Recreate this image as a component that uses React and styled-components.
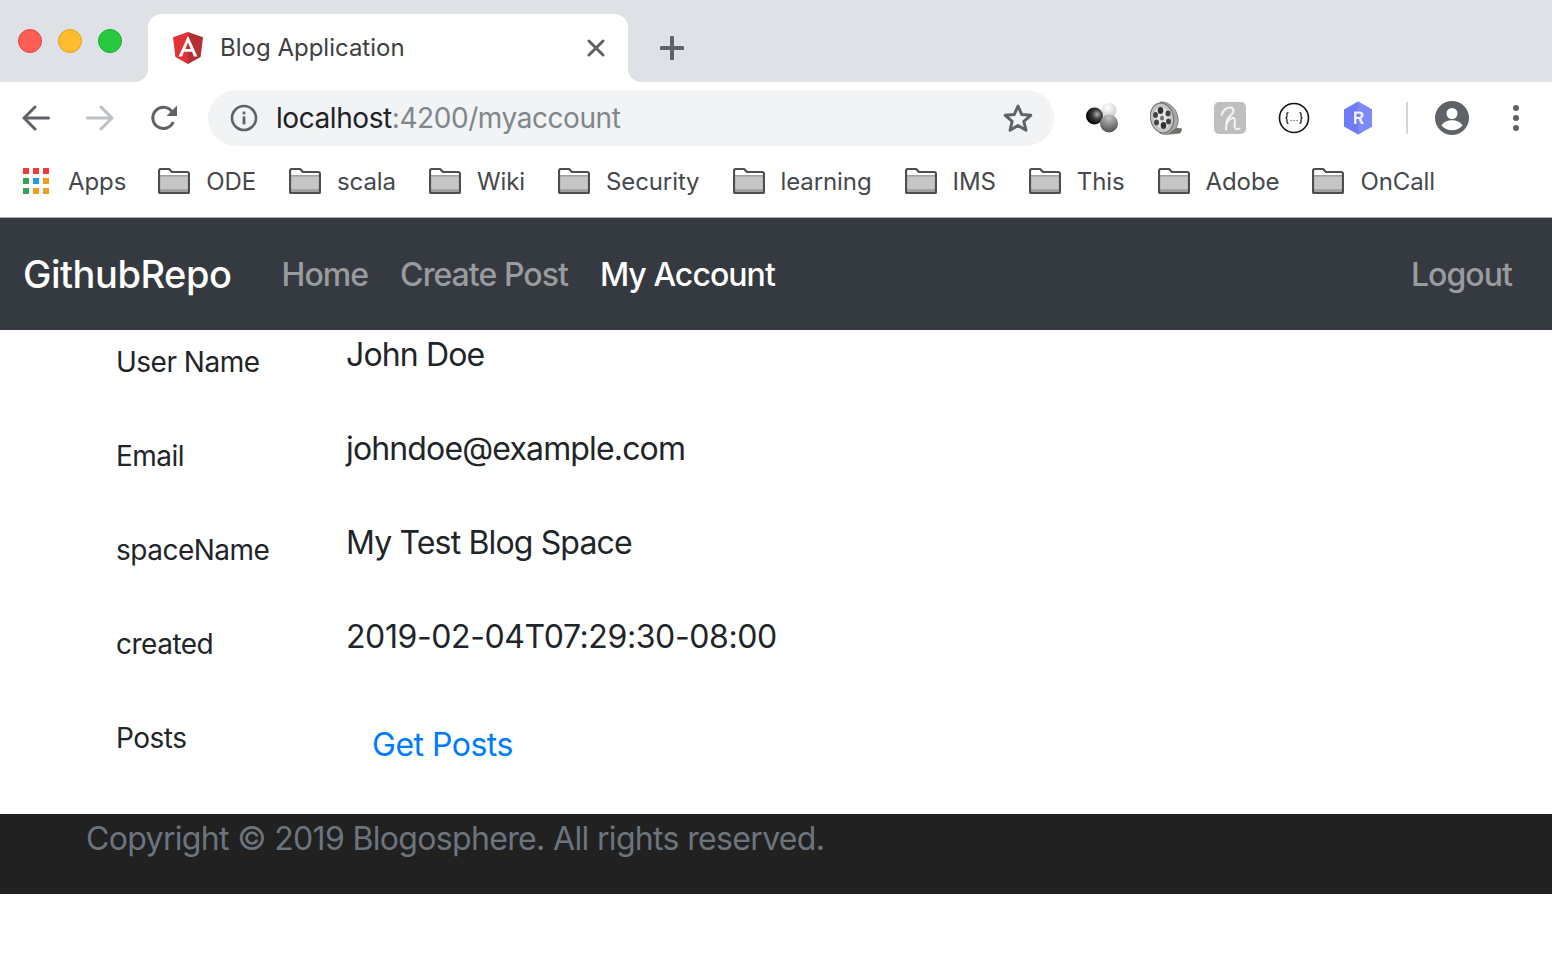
import React from "react";
import styled, { createGlobalStyle } from "styled-components";

const GlobalStyle = createGlobalStyle`
  html, body {
    margin: 0;
    padding: 0;
    background: #fff;
    font-family: Inter, "Liberation Sans", sans-serif;
  }
  * { box-sizing: border-box; }
`;

const TabStrip = styled.div`
  height: 82px;
  background: #dee1e6;
  display: flex;
  align-items: flex-end;
  padding-left: 18px;
`;

const Lights = styled.div`
  display: flex;
  gap: 16px;
  align-self: flex-start;
  margin-top: 29px;
  margin-right: 26px;
`;

const Light = styled.span`
  width: 24px;
  height: 24px;
  border-radius: 50%;
  background: ${(p) => p.$color};
  border: 1px solid ${(p) => p.$edge};
`;

const Tab = styled.div`
  position: relative;
  width: 480px;
  height: 68px;
  background: #fff;
  border-radius: 14px 14px 0 0;
  display: flex;
  align-items: center;
  padding: 0 23px 0 24px;
  &::before, &::after {
    content: "";
    position: absolute;
    bottom: 0;
    width: 14px;
    height: 14px;
  }
  &::before {
    left: -14px;
    background: radial-gradient(circle at 0 0, #dee1e6 14px, #fff 14.5px);
  }
  &::after {
    right: -14px;
    background: radial-gradient(circle at 100% 0, #dee1e6 14px, #fff 14.5px);
  }
`;

const TabTitle = styled.span`
  flex: 1;
  margin-left: 16px;
  padding-bottom: 2px;
  font-size: 24px;
  color: #3c4043;
`;

const NewTab = styled.svg`
  width: 24px;
  height: 24px;
  margin: 0 0 22px 32px;
`;

const Toolbar = styled.div`
  height: 72px;
  display: flex;
  align-items: center;
  padding-left: 22px;
`;

const NavIcons = styled.div`
  display: flex;
  align-items: center;
  gap: 36px;
  margin-right: 30px;
`;

const Omnibox = styled.div`
  width: 846px;
  height: 56px;
  border-radius: 28px;
  background: #f1f3f4;
  display: flex;
  align-items: center;
  padding: 0 20px 0 22px;
`;

const Url = styled.span`
  flex: 1;
  margin-left: 18px;
  font-size: 28px;
  color: #202124;
  letter-spacing: -0.43px;
`;

const UrlRest = styled.span`
  color: #80868b;
`;

const Extensions = styled.div`
  display: flex;
  align-items: center;
  margin-left: 16px;
`;

const ExtSlot = styled.div`
  width: 64px;
  height: 36px;
  display: flex;
  align-items: center;
  justify-content: center;
`;

const Divider = styled.span`
  width: 2px;
  height: 32px;
  background: #d4d6d9;
  margin: 0 12px 0 16px;
`;

const Bookmarks = styled.div`
  height: 64px;
  border-bottom: 1px solid #a9abae;
  display: flex;
  align-items: center;
  padding: 0 0 9px 23px;
`;

const Bookmark = styled.div`
  display: flex;
  align-items: center;
  gap: 16px;
  margin-right: 33px;
  font-size: 24px;
  color: #45484c;
  letter-spacing: -0.1px;
  white-space: nowrap;
`;

const AppsBookmark = styled(Bookmark)`
  gap: 19px;
  margin-right: 32px;
`;

const Navbar = styled.nav`
  height: 112px;
  background: #343a40;
  display: flex;
  align-items: center;
  padding: 0 40px 0 23px;
`;

const Brand = styled.a`
  font-size: 38px;
  font-weight: 500;
  color: #fff;
  margin-right: 50px;
  letter-spacing: -0.45px;
`;

const NavLinks = styled.div`
  display: flex;
  gap: 32px;
  flex: 1;
`;

const NavLink = styled.a`
  font-size: 32px;
  font-weight: 500;
  letter-spacing: -0.95px;
  color: ${(p) => (p.$active ? "#fff" : "rgba(255,255,255,0.5)")};
`;

const Content = styled.main`
  height: 484px;
  padding-left: 116px;
`;

const Row = styled.div`
  height: 94px;
  display: grid;
  grid-template-columns: 230px 1fr;
`;

const Label = styled.div`
  font-size: 28px;
  line-height: 42px;
  padding-top: 11px;
  color: #212529;
  letter-spacing: -0.5px;
`;

const Value = styled.div`
  font-size: 32px;
  line-height: 48px;
  padding-top: 1px;
  color: #212529;
  letter-spacing: ${(p) => (p.$numeric ? "-0.4px" : "-0.85px")};
`;

const PostsLink = styled.a`
  display: block;
  font-size: 32px;
  line-height: 48px;
  margin: 15px 0 0 26px;
  color: #007bff;
  letter-spacing: -0.5px;
`;

const Footer = styled.footer`
  height: 80px;
  background: #212121;
  padding: 1px 0 0 86px;
  font-size: 32px;
  line-height: 48px;
  color: #6c757d;
  letter-spacing: -0.66px;
`;

const AngularLogo = () => (
  <svg width="32" height="34" viewBox="0 0 32 34">
    <path d="M16 1 1 6.3l2.4 19.6L16 33z" fill="#e23237" />
    <path d="M16 1l15 5.3-2.4 19.6L16 33z" fill="#b52e31" />
    <path d="M16 4.7 6.6 25.5h3.5l1.9-4.7h8l1.9 4.7h3.5zm2.7 13.3h-5.4L16 11.5z" fill="#fff" />
  </svg>
);

const CloseIcon = () => (
  <svg width="18" height="18" viewBox="0 0 18 18">
    <path d="M2 2l14 14M16 2 2 16" stroke="#5f6368" strokeWidth="3" strokeLinecap="round" />
  </svg>
);

const BackIcon = ({ color }) => (
  <svg width="28" height="26" viewBox="0 0 28 26">
    <path d="M26.5 13H3M13 2 2 13l11 11" fill="none" stroke={color} strokeWidth="3" strokeLinecap="round" />
  </svg>
);

const ForwardIcon = ({ color }) => (
  <svg width="28" height="26" viewBox="0 0 28 26">
    <path d="M1.5 13H25M15 2l11 11-11 11" fill="none" stroke={color} strokeWidth="3" strokeLinecap="round" />
  </svg>
);

const ReloadIcon = () => (
  <svg width="28" height="28" viewBox="0 0 28 28">
    <path d="M23.2 18a10.6 10.6 0 1 1-1.4-10.6" fill="none" stroke="#5f6368" strokeWidth="3" />
    <path d="M27 1.5V12H16.5z" fill="#5f6368" />
  </svg>
);

const InfoIcon = () => (
  <svg width="28" height="28" viewBox="0 0 28 28">
    <circle cx="14" cy="14" r="12" fill="none" stroke="#5f6368" strokeWidth="2.6" />
    <rect x="12.6" y="12.4" width="2.8" height="8" fill="#5f6368" />
    <rect x="12.6" y="7.6" width="2.8" height="2.8" fill="#5f6368" />
  </svg>
);

const StarIcon = () => (
  <svg width="32" height="32" viewBox="0 0 28 28">
    <path d="M14 3.5l3.2 7.4 8 .7-6.1 5.3 1.9 7.9-7-4.2-7 4.2 1.9-7.9-6.1-5.3 8-.7z" fill="none" stroke="#5f6368" strokeWidth="2.6" strokeLinejoin="round" />
  </svg>
);

const BallsIcon = () => (
  <svg width="32" height="30" viewBox="0 0 32 30">
    <defs>
      <radialGradient id="ballDark" cx="0.65" cy="0.4" r="0.65">
        <stop offset="0" stopColor="#b0b0b0" />
        <stop offset="0.45" stopColor="#3a3a3a" />
        <stop offset="1" stopColor="#000" />
      </radialGradient>
      <radialGradient id="ballLight" cx="0.4" cy="0.3" r="0.75">
        <stop offset="0" stopColor="#fff" />
        <stop offset="1" stopColor="#c8c8c8" />
      </radialGradient>
      <radialGradient id="ballMid" cx="0.5" cy="0.15" r="0.85">
        <stop offset="0" stopColor="#c4c4c4" />
        <stop offset="1" stopColor="#4f4f4f" />
      </radialGradient>
    </defs>
    <circle cx="23" cy="7.5" r="7.5" fill="url(#ballLight)" />
    <circle cx="8.5" cy="13" r="8.5" fill="url(#ballDark)" />
    <circle cx="23" cy="20.5" r="9" fill="url(#ballMid)" />
  </svg>
);

const ReelIcon = () => (
  <svg width="32" height="34" viewBox="0 0 32 34">
    <path d="M10 1C18 0 27 7 28 17c.4 4 0 7-2 10l6 1-2 4-14 1.500-6-1z" fill="#a9a7a1" stroke="#77756f" strokeWidth="0.8" />
    <path d="M26 27l6 1-2 4-12 1z" fill="#6f6e6a" />
    <ellipse cx="12" cy="17" rx="11.500" ry="15" transform="rotate(-12 12 17)" fill="#c4c4c4" stroke="#6d6d6d" />
    <ellipse cx="12" cy="17" rx="8" ry="11" transform="rotate(-12 12 17)" fill="#e6e6e6" />
    <ellipse cx="12" cy="17" rx="2" ry="2.500" fill="#6f6f6f" />
    <ellipse cx="10.500" cy="9.500" rx="2.800" ry="3.400" fill="#333" />
    <ellipse cx="13.500" cy="24.500" rx="2.800" ry="3.400" fill="#333" />
    <ellipse cx="5.500" cy="14" rx="2.500" ry="3" fill="#444" />
    <ellipse cx="18" cy="12.500" rx="2.500" ry="3" fill="#444" />
    <ellipse cx="6.500" cy="21.500" rx="2.500" ry="3" fill="#444" />
    <ellipse cx="18.500" cy="20.500" rx="2.500" ry="3" fill="#444" />
  </svg>
);

const HoneyIcon = () => (
  <svg width="32" height="32" viewBox="0 0 32 32">
    <rect width="32" height="32" rx="5" fill="#bfbfbf" />
    <path d="M7.700 12.700C9 8 13 5 16.500 5.500 20 6 20.500 9.500 17.500 12.500 15 15 12.800 17 12.500 20L12 27.500M12.300 23C13.500 19 17 15.500 19.500 16 22 16.500 20.500 21 20.500 24 20.500 27 23 28 25.500 26.500" fill="none" stroke="#f4f4f4" strokeWidth="2" strokeLinecap="round" strokeLinejoin="round" />
  </svg>
);

const JsonIcon = () => (
  <svg width="32" height="32" viewBox="0 0 32 32">
    <circle cx="16" cy="16" r="14.500" fill="#fff" stroke="#111" strokeWidth="1.600" />
    <path d="M10.500 10.500c-2 0-1.500 1.500-1.500 3s-.5 2.500-1.500 2.500c1 0 1.500 1 1.500 2.500s-.5 3 1.500 3M21.500 10.500c2 0 1.500 1.500 1.500 3s.5 2.500 1.500 2.500c-1 0-1.500 1-1.500 2.500s.5 3-1.500 3" fill="none" stroke="#111" strokeWidth="1.200" />
    <path d="M12.500 18.500h1M15.500 18.500h1M18.500 18.500h1" stroke="#333" strokeWidth="1.200" />
  </svg>
);

const RenovateIcon = () => (
  <svg width="30" height="34" viewBox="0 0 30 34">
    <path d="M15 .5 29 8.500v17L15 33.500 1 25.500v-17z" fill="#6d7cf2" />
    <path d="M15 .5 29 8.500v17L15 33.500z" fill="#7d8af5" />
    <path d="M11 10.500h5.500c2.500 0 4 1.400 4 3.600 0 1.700-.9 2.900-2.300 3.400l2.800 5.500h-3l-2.500-5h-2v5H11zm2.500 2.200v3.200h2.700c1.100 0 1.700-.6 1.700-1.600s-.6-1.600-1.700-1.600z" fill="#eef0ff" />
  </svg>
);

const ProfileIcon = () => (
  <svg width="34" height="34" viewBox="0 0 34 34">
    <circle cx="17" cy="17" r="17" fill="#5f6368" />
    <circle cx="17" cy="12.500" r="5.500" fill="#fff" />
    <path d="M6.500 24.500c2-3.800 6.500-5.200 10.500-5.200s8.500 1.400 10.500 5.200c-2.500 3-6.300 4.800-10.500 4.800s-8-1.800-10.500-4.800z" fill="#fff" />
  </svg>
);

const MoreIcon = () => (
  <svg width="8" height="28" viewBox="0 0 8 28">
    <circle cx="4" cy="4" r="3" fill="#5f6368" />
    <circle cx="4" cy="14" r="3" fill="#5f6368" />
    <circle cx="4" cy="24" r="3" fill="#5f6368" />
  </svg>
);

const AppsIcon = () => {
  const colors = ["#ef3b36", "#ef3b36", "#ef3b36", "#34a35a", "#2196f3", "#f09d22", "#34a35a", "#f09d22", "#f09d22"];
  return (
    <svg width="26" height="26" viewBox="0 0 26 26">
      {colors.map((c, i) => (
        <rect key={i} x={(i % 3) * 10} y={Math.floor(i / 3) * 10} width="6" height="6" fill={c} />
      ))}
    </svg>
  );
};

const FolderIcon = () => (
  <svg width="32" height="26" viewBox="0 0 32 26">
    <path d="M1 24V3q0-2 2-2h8l3 3h15q2 0 2 2v18q0 1-1 1H2q-1 0-1-1z" fill="#fff" />
    <rect x="2" y="8" width="28" height="13" fill="#c6c6c6" />
    <rect x="2" y="21" width="28" height="3" fill="#a2a2a2" />
    <path d="M2 7.800h28" stroke="#77797c" strokeWidth="1" />
    <path d="M1 24V3q0-2 2-2h8l3 3h15q2 0 2 2v18q0 1-1 1H2q-1 0-1-1z" fill="none" stroke="#4c4e51" strokeWidth="2.200" />
  </svg>
);

const bookmarks = ["ODE", "scala", "Wiki", "Security", "learning", "IMS", "This", "Adobe", "OnCall"];

const details = [
  ["User Name", "John Doe"],
  ["Email", "johndoe@example.com"],
  ["spaceName", "My Test Blog Space"],
  ["created", "2019-02-04T07:29:30-08:00", true],
];

export default function App() {
  return (
    <>
      <GlobalStyle />
      <TabStrip>
        <Lights>
          <Light $color="#ff5f57" $edge="#e2463f" />
          <Light $color="#ffbd2e" $edge="#dfa023" />
          <Light $color="#28c940" $edge="#1aab29" />
        </Lights>
        <Tab>
          <AngularLogo />
          <TabTitle>Blog Application</TabTitle>
          <CloseIcon />
        </Tab>
        <NewTab viewBox="0 0 24 24">
          <path d="M12 1.500v21M1.500 12h21" stroke="#5f6368" strokeWidth="4" strokeLinecap="round" />
        </NewTab>
      </TabStrip>
      <Toolbar>
        <NavIcons>
          <BackIcon color="#5f6368" />
          <ForwardIcon color="#bdc1c6" />
          <ReloadIcon />
        </NavIcons>
        <Omnibox>
          <InfoIcon />
          <Url>
            localhost<UrlRest>:4200/myaccount</UrlRest>
          </Url>
          <StarIcon />
        </Omnibox>
        <Extensions>
          <ExtSlot><BallsIcon /></ExtSlot>
          <ExtSlot><ReelIcon /></ExtSlot>
          <ExtSlot><HoneyIcon /></ExtSlot>
          <ExtSlot><JsonIcon /></ExtSlot>
          <ExtSlot><RenovateIcon /></ExtSlot>
          <Divider />
          <ExtSlot><ProfileIcon /></ExtSlot>
          <ExtSlot><MoreIcon /></ExtSlot>
        </Extensions>
      </Toolbar>
      <Bookmarks>
        <AppsBookmark>
          <AppsIcon />
          Apps
        </AppsBookmark>
        {bookmarks.map((name) => (
          <Bookmark key={name}>
            <FolderIcon />
            {name}
          </Bookmark>
        ))}
      </Bookmarks>
      <Navbar>
        <Brand>GithubRepo</Brand>
        <NavLinks>
          <NavLink>Home</NavLink>
          <NavLink>Create Post</NavLink>
          <NavLink $active>My Account</NavLink>
        </NavLinks>
        <NavLink>Logout</NavLink>
      </Navbar>
      <Content>
        {details.map(([label, value, numeric]) => (
          <Row key={label}>
            <Label>{label}</Label>
            <Value $numeric={numeric}>{value}</Value>
          </Row>
        ))}
        <Row>
          <Label>Posts</Label>
          <div>
            <PostsLink>Get Posts</PostsLink>
          </div>
        </Row>
      </Content>
      <Footer>Copyright © 2019 Blogosphere. All rights reserved.</Footer>
    </>
  );
}
